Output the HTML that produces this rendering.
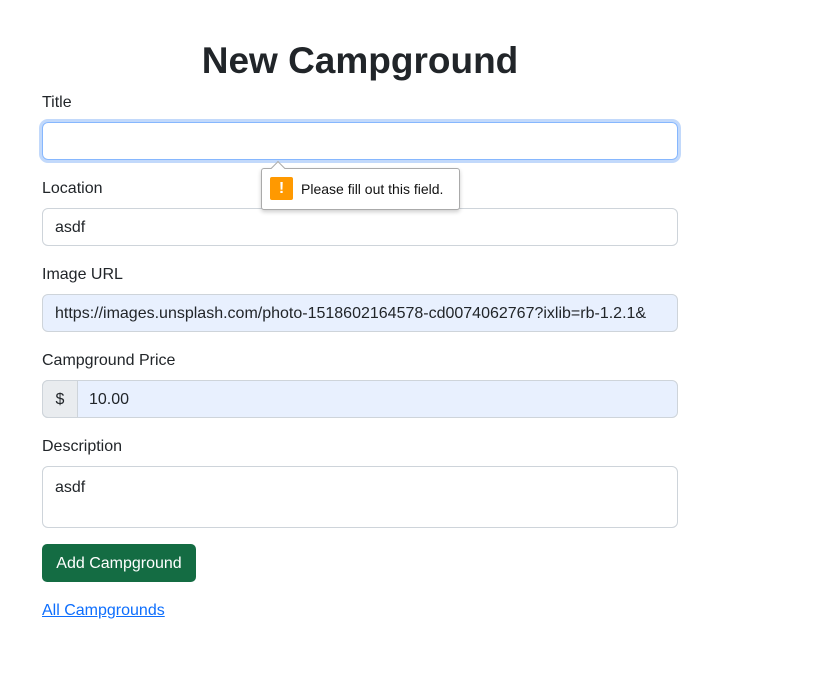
<!DOCTYPE html>
<html><head><style>
body{margin:0;background:#fff;font-family:"Liberation Sans",sans-serif;color:#212529;width:834px;height:684px;position:relative;overflow:hidden}
.a{position:absolute}
h1{position:absolute;left:0;width:720px;text-align:center;top:37px;margin:0;font-size:37px;font-weight:bold;line-height:48px}
.lbl{position:absolute;left:42px;font-size:16px;line-height:24px}
.in{position:absolute;left:42px;width:636px;border:1px solid #ced4da;border-radius:6px;box-sizing:border-box;font-size:16px;padding-left:12px;line-height:38px;height:38px}
</style></head><body>
<h1>New Campground</h1>
<div class="lbl" style="top:91px">Title</div>
<div class="in" style="top:122px;border-color:#86b7fe;box-shadow:0 0 0 3px #c2d9fb;"></div>
<div class="lbl" style="top:177px">Location</div>
<div class="in" style="top:208px">asdf</div>
<div class="lbl" style="top:263px">Image URL</div>
<div class="in" style="top:294px;background:#e8f0fe;overflow:hidden;white-space:nowrap">https://images.unsplash.com/photo-1518602164578-cd0074062767?ixlib=rb-1.2.1&amp;</div>
<div class="lbl" style="top:349px">Campground Price</div>
<div class="in" style="top:380px;background:#e8f0fe;padding-left:46px">10.00</div>
<div class="a" style="left:42px;top:380px;width:36px;height:38px;box-sizing:border-box;border:1px solid #ced4da;border-radius:6px 0 0 6px;background:#e9ecef;text-align:center;line-height:38px;font-size:16px">$</div>
<div class="lbl" style="top:435px">Description</div>
<div class="in" style="top:466px;height:62px;line-height:24px;padding-top:9px">asdf</div>
<div class="a" style="left:42px;top:544px;width:154px;height:38px;background:#146c43;border-radius:5px;color:#fff;font-size:16px;line-height:40px;text-align:center">Add Campground</div>
<div class="a" style="left:42px;top:600px;color:#0d6efd;text-decoration:underline;font-size:16px;line-height:22px">All Campgrounds</div>
<div class="a" style="left:261px;top:168px;width:199px;height:42px;border:1px solid #aaa;border-radius:3px;background:#fff;box-shadow:0 2px 4px rgba(0,0,0,.2);box-sizing:border-box"></div>
<div class="a" style="left:273px;top:163px;width:9px;height:9px;background:#fff;border-left:1px solid #aaa;border-top:1px solid #aaa;transform:rotate(45deg)"></div>
<div class="a" style="left:270px;top:177px;width:23px;height:23px;background:#f90;border-radius:2px;color:#fff;font-weight:bold;text-align:center;line-height:23px;font-size:16px">!</div>
<div class="a" style="left:301px;top:180px;font-size:14px;line-height:18px;color:#111">Please fill out this field.</div>
</body></html>
